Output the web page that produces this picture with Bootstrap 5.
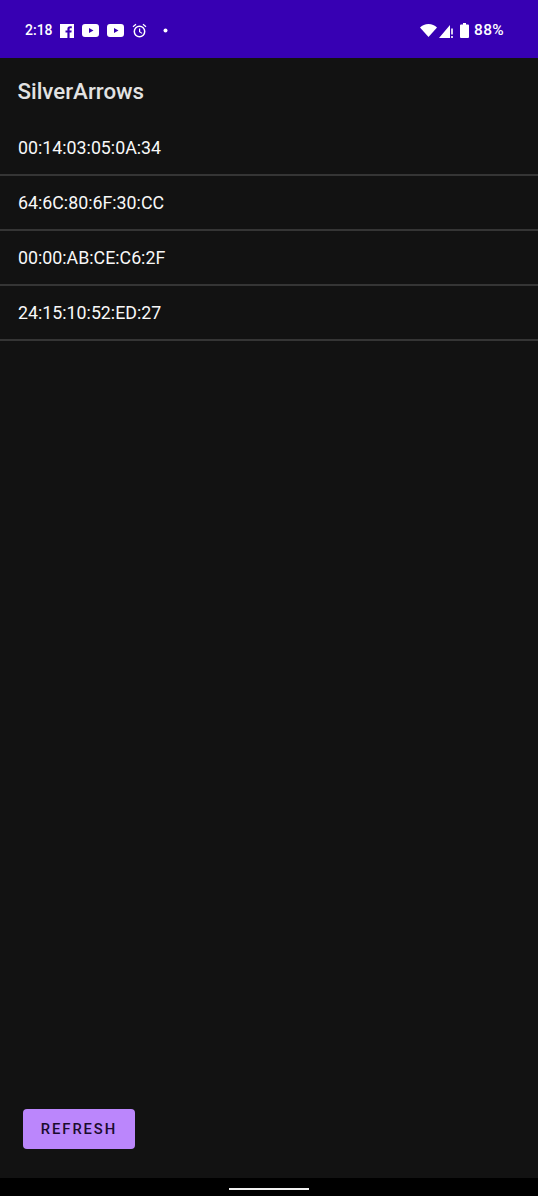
<!DOCTYPE html>
<html lang="en">

<head>
    <meta charset="UTF-8">
    <meta name="viewport" content="width=device-width, initial-scale=1.0">
    <title>SilverArrows</title>
    <link href="https://cdn.jsdelivr.net/npm/bootstrap@5.3.0/dist/css/bootstrap.min.css" rel="stylesheet">
    <style>
        html, body {
            height: 100%;
        }

        body {
            background-color: #121212;
            font-family: Roboto, "Liberation Sans", sans-serif;
            overflow: hidden;
        }

        .status-bar {
            height: 58px;
            background-color: #3700b3;
            color: #fff;
            padding: 3px 34px 0 25px;
            font-size: 14px;
            font-weight: 500;
        }

        .status-bar svg {
            display: block;
            fill: #fff;
        }

        .clock-text {
            margin-right: 7px;
        }

        .battery-text {
            margin-left: 5px;
            font-size: 15.5px;
            letter-spacing: .3px;
        }

        .signal-icon {
            margin-left: 2px;
        }

        .battery-icon {
            margin-left: 7px;
        }

        .app-title {
            height: 63px;
            padding: 4px 0 0 17.5px;
            font-size: 22.3px;
            font-weight: 500;
            color: #e2e2e2;
        }

        .list-group-flush > .device-item,
        .list-group-flush > .device-item:last-child {
            height: 55px;
            background-color: transparent;
            border-color: #353535;
            border-width: 0 0 2px 0;
            border-radius: 0;
            padding: 1px 0 0 18px;
            color: #f8f8f8;
            font-size: 17.8px;
            display: flex;
            align-items: center;
        }

        .app-main {
            min-height: 0;
        }

        .refresh-btn {
            width: 112px;
            height: 40px;
            margin: 0 0 29px 23px;
            padding: 0;
            background-color: #bb86fc;
            border: 0;
            border-radius: 4px;
            color: #1a0b2e;
            font-size: 14.8px;
            font-weight: 500;
            letter-spacing: 1.9px;
        }

        .nav-strip {
            height: 18px;
            background-color: #000;
        }

        .nav-pill {
            width: 80px;
            height: 2px;
            margin-top: 10px;
            background-color: #f0f0f0;
        }
    </style>
</head>

<body class="d-flex flex-column">
    <div class="status-bar d-flex align-items-center flex-shrink-0">
        <span class="clock-text">2:18</span>
        <div class="d-flex align-items-center gap-2">
            <svg width="14" height="14" viewBox="0 0 14 14"><path fill-rule="evenodd" d="M0 0h14v14H0zM9.6 14V8.6h1.8l.3-2.1H9.6V5.2c0-.6.2-1 1-1h1.2V2.3c-.3 0-.9-.1-1.7-.1-1.700 0-2.700 1-2.700 2.800v1.500H5.500v2.100h1.900V14z"/></svg>
            <svg width="17" height="13" viewBox="0 0 17 13"><path fill-rule="evenodd" d="M3 0h11a3 3 0 0 1 3 3v7a3 3 0 0 1-3 3H3a3 3 0 0 1-3-3V3a3 3 0 0 1 3-3zM7 4v5l4.500-2.500z"/></svg>
            <svg width="17" height="13" viewBox="0 0 17 13"><path fill-rule="evenodd" d="M3 0h11a3 3 0 0 1 3 3v7a3 3 0 0 1-3 3H3a3 3 0 0 1-3-3V3a3 3 0 0 1 3-3zM7 4v5l4.500-2.500z"/></svg>
            <svg width="15" height="15" viewBox="0 0 15 15"><circle cx="7.500" cy="8.500" r="5.200" fill="none" stroke="#fff" stroke-width="1.500"/><path d="M7 5.500h1.200v3l2.200 1.400-.6.900L7 9zM.6 3.200 3.600.8l.8 1-3 2.400zM14.400 3.200 11.400.8l-.8 1 3 2.400z"/></svg>
            <svg class="ms-2" width="5" height="5" viewBox="0 0 5 5"><circle cx="2.500" cy="2.500" r="2"/></svg>
        </div>
        <div class="d-flex align-items-center ms-auto">
            <svg width="17" height="13" viewBox="0 0 17 13"><path d="M8.500 13 0 3.500C2.200 1.300 5.200 0 8.500 0S14.800 1.300 17 3.500z"/></svg>
            <svg class="signal-icon" width="14" height="14" viewBox="0 0 14 14"><path d="M0 14 11 1v13zM12.200 4.500h1.600v6h-1.600zM12.200 12h1.600v2h-1.600z"/></svg>
            <svg class="battery-icon" width="9" height="15" viewBox="0 0 9 15"><path d="M3 0h3v1.500h2a1 1 0 0 1 1 1V14a1 1 0 0 1-1 1H1a1 1 0 0 1-1-1V2.500a1 1 0 0 1 1-1h2z"/></svg>
            <span class="battery-text">88%</span>
        </div>
    </div>

    <div class="app-main flex-grow-1 d-flex flex-column">
        <div class="app-title d-flex align-items-center">SilverArrows</div>
        <ul class="list-group list-group-flush">
            <li class="list-group-item device-item">00:14:03:05:0A:34</li>
            <li class="list-group-item device-item">64:6C:80:6F:30:CC</li>
            <li class="list-group-item device-item">00:00:AB:CE:C6:2F</li>
            <li class="list-group-item device-item">24:15:10:52:ED:27</li>
        </ul>
        <div class="mt-auto">
            <button type="button" class="btn refresh-btn">REFRESH</button>
        </div>
    </div>

    <div class="nav-strip d-flex justify-content-center flex-shrink-0">
        <div class="nav-pill"></div>
    </div>
    <script src="https://cdn.jsdelivr.net/npm/bootstrap@5.3.0/dist/js/bootstrap.bundle.min.js"></script>
</body>

</html>
